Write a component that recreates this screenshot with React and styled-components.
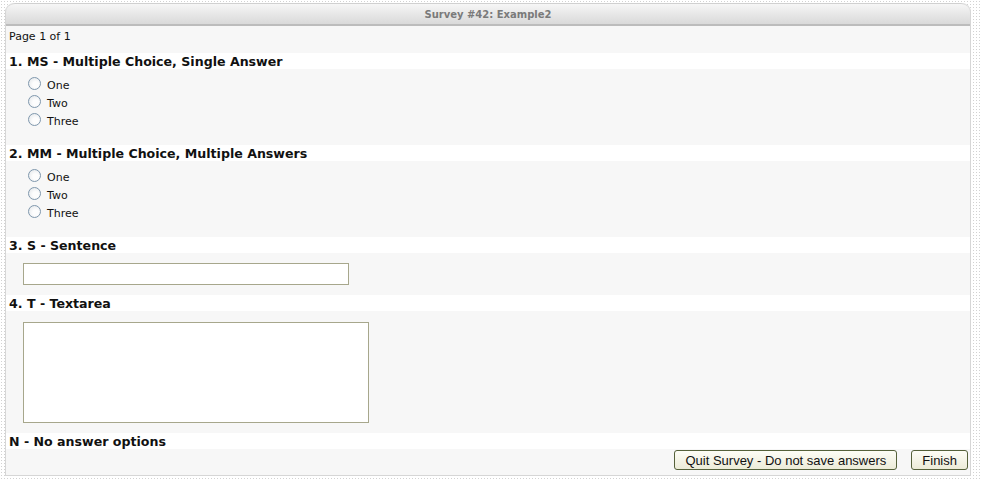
import styled, { createGlobalStyle } from "styled-components";

const Global = createGlobalStyle`
  html, body {
    margin: 0;
    padding: 0;
  }
  body {
    background-color: #fff;
    background-image: radial-gradient(#d2d2d2 1px, transparent 1px);
    background-size: 3px 3px;
    font-family: "DejaVu Sans", Verdana, sans-serif;
  }
`;

const Page = styled.div`
  padding: 3px 11px 3px 5px;
  height: 479px;
  box-sizing: border-box;
  display: flex;
`;

const Panel = styled.div`
  flex: 1;
  display: flex;
  flex-direction: column;
  background: #f7f7f7;
  border: 1px solid #d6d6d6;
  border-top: none;
  border-radius: 9px 9px 0 0;
`;

const Header = styled.div`
  height: 20px;
  border-radius: 9px 9px 0 0;
  border-top: 1px solid #d0d0d0;
  border-bottom: 2px solid #bcbcbc;
  background: linear-gradient(#f6f6f6, #d9d9d9);
  display: flex;
  align-items: center;
  justify-content: center;
  font-size: 10px;
  font-weight: bold;
  color: #7a7a7a;
`;

const PageInfo = styled.div`
  font-size: 11px;
  color: #111;
  padding: 4px 3px 0;
  height: 23px;
`;

const QuestionTitle = styled.div`
  background: #fff;
  height: 16px;
  display: flex;
  align-items: center;
  padding-left: 3px;
  font-size: 12.6px;
  font-weight: bold;
  color: #111;
`;

const Answers = styled.div`
  padding: ${(p) => p.$pad || "7px 0 15px 22px"};
  display: flex;
  flex-direction: column;
  align-items: flex-start;
`;

const Option = styled.label`
  display: flex;
  align-items: center;
  height: 18px;
  font-size: 11px;
  color: #111;
`;

const Radio = styled.input.attrs({ type: "radio" })`
  appearance: none;
  margin: 0 6px 0 0;
  width: 13px;
  height: 13px;
  border-radius: 50%;
  border: 1px solid #7f97ad;
  background: radial-gradient(circle at 60% 60%, #fdfdfd 30%, #dfe3e7 100%);
  box-sizing: border-box;
  position: relative;
  top: -2px;
`;

const TextInput = styled.input`
  display: block;
  width: 326px;
  height: 22px;
  box-sizing: border-box;
  border: 1px solid #a7a78c;
  background: #fff;
  margin: 0;
`;

const TextArea = styled.textarea`
  display: block;
  width: 346px;
  height: 101px;
  box-sizing: border-box;
  border: 1px solid #a7a78c;
  background: #fff;
  resize: none;
  margin: 0;
`;

const Footer = styled.div`
  flex: 1;
  display: flex;
  justify-content: flex-end;
  align-items: flex-start;
  gap: 14px;
  padding: 1px 2px 0 0;
`;

const Button = styled.button`
  height: 20px;
  padding: 0 10px;
  font-family: "Liberation Sans", Arial, sans-serif;
  font-size: 13px;
  color: #111;
  border: 1px solid #55613a;
  border-radius: 3px;
  background: linear-gradient(#fdfdf6, #ecebd8);
`;

const choices = ["One", "Two", "Three"];

const ChoiceList = ({ name }) => (
  <Answers>
    {choices.map((c) => (
      <Option key={c}>
        <Radio name={name} />
        {c}
      </Option>
    ))}
  </Answers>
);

export default function App() {
  return (
    <>
      <Global />
      <Page>
        <Panel>
          <Header>Survey #42: Example2</Header>
          <PageInfo>Page 1 of 1</PageInfo>
          <QuestionTitle>1. MS - Multiple Choice, Single Answer</QuestionTitle>
          <ChoiceList name="q1" />
          <QuestionTitle>2. MM - Multiple Choice, Multiple Answers</QuestionTitle>
          <ChoiceList name="q2" />
          <QuestionTitle>3. S - Sentence</QuestionTitle>
          <Answers $pad="10px 0 10px 17px">
            <TextInput />
          </Answers>
          <QuestionTitle>4. T - Textarea</QuestionTitle>
          <Answers $pad="11px 0 10px 17px">
            <TextArea />
          </Answers>
          <QuestionTitle>N - No answer options</QuestionTitle>
          <Footer>
            <Button>Quit Survey - Do not save answers</Button>
            <Button>Finish</Button>
          </Footer>
        </Panel>
      </Page>
    </>
  );
}
